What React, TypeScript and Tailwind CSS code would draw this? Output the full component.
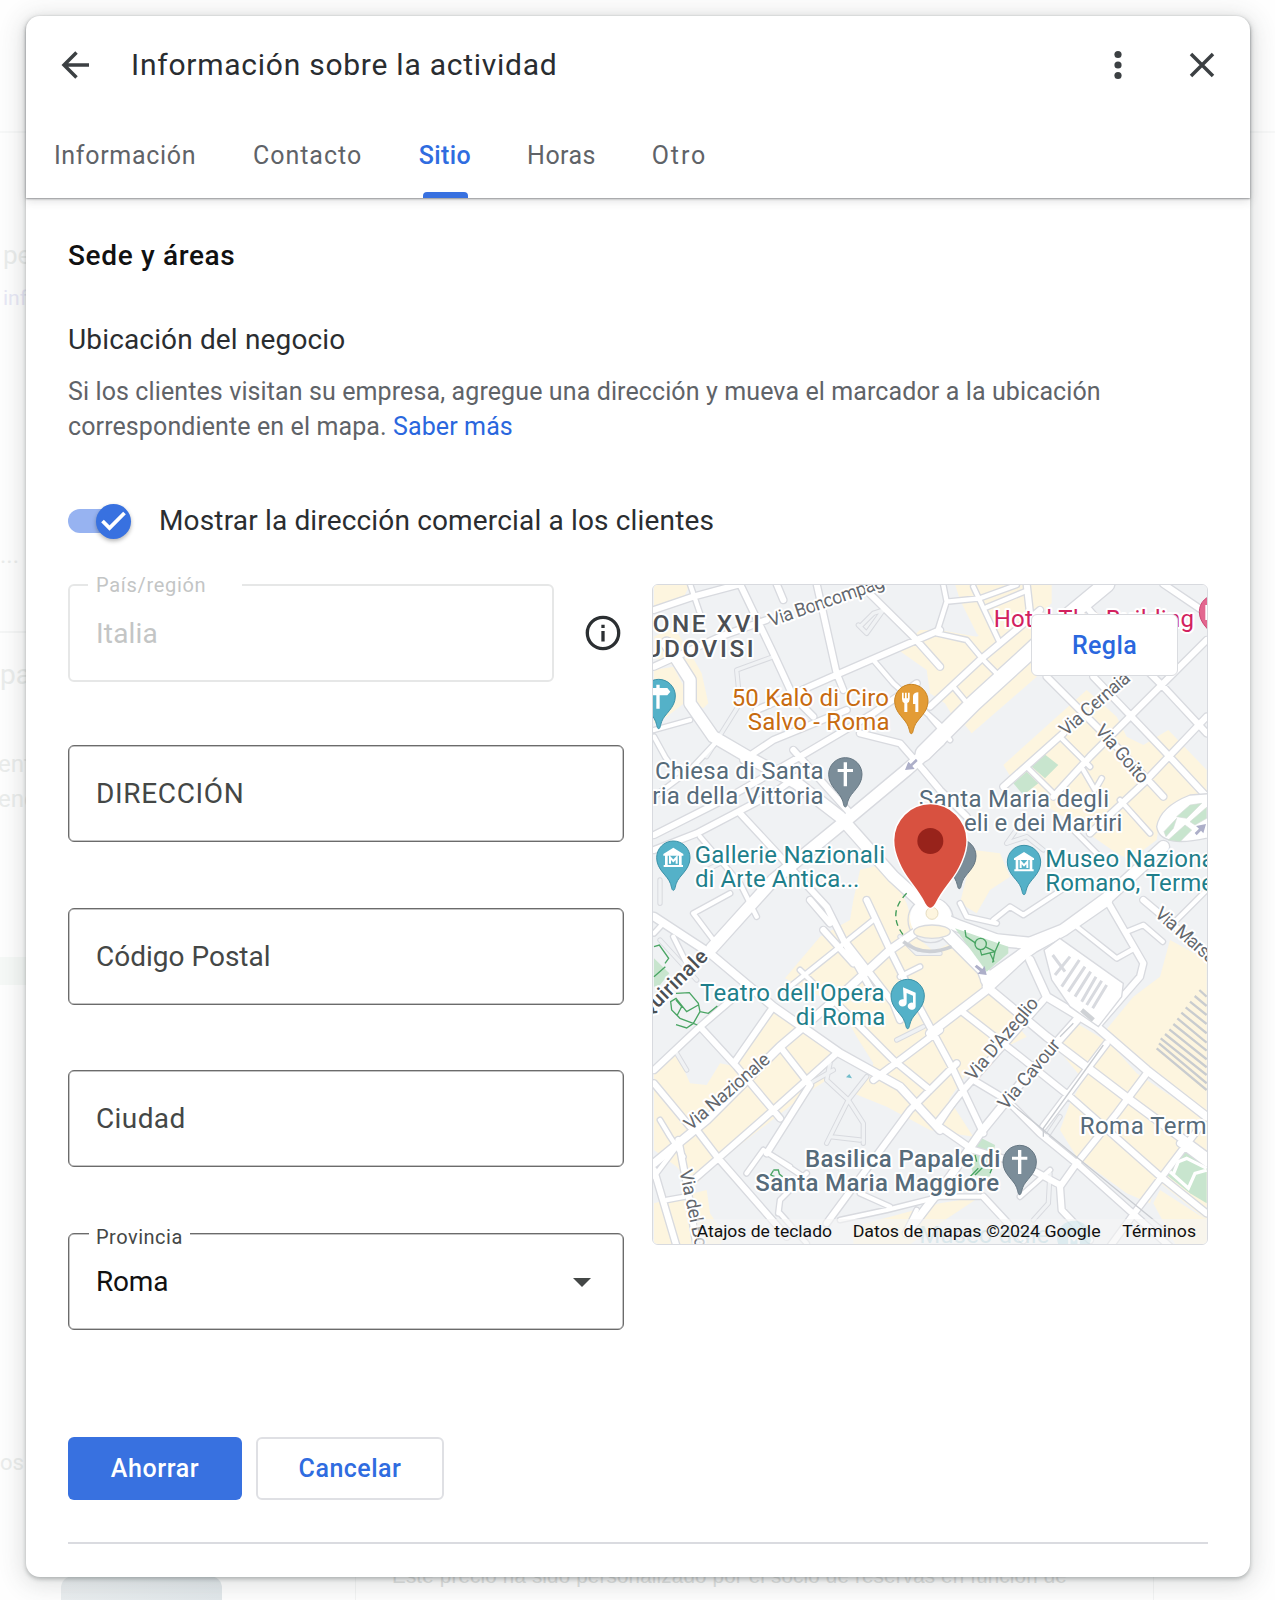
import type { ReactNode } from 'react';

const tabs = [
  { label: 'Información', width: 'w-[142px]', tracking: 'tracking-[0.68px]' },
  { label: 'Contacto', width: 'w-[109px]', tracking: 'tracking-[0.98px]' },
  { label: 'Sitio', width: 'w-[52px]', tracking: 'tracking-[0.4px]', active: true },
  { label: 'Horas', width: 'w-[67px]', tracking: 'tracking-[0.45px]' },
  { label: 'Otro', width: 'w-[55px]', tracking: 'tracking-[1.9px]' },
];

// Map geometry lives in one 1668x1983 coordinate space (3 units per pixel)
const blocks = [
  '42,42 150,42 130,85 42,112',
  '42,200 100,170 140,230 185,310 205,400 190,415 165,400 140,330 110,290 42,262',
  '100,290 132,350 132,400 80,440 42,460 42,300',
  '775,240 840,180 900,180 1010,200 1170,120 1170,240 945,450 915,400 870,370 860,300',
  '945,42 1235,42 1235,100 1190,140 1190,320 995,490 975,465 1010,425 1120,320 1010,190 960,90',
  '1090,585 1340,360 1430,440 1460,500 1510,525 1585,480 1700,600 1700,670 1650,680 1560,740 1550,810 1470,870 1430,850 1330,780 1270,740 1130,650',
  '1000,840 1080,850 1110,920 1050,960 1010,1030 960,1000',
  '660,900 740,880 800,1000 830,1100 900,1160 900,1290 870,1500 1000,1700 870,1680 740,1610 640,1570 690,1520 700,1480 650,1400 600,1310 435,1225 540,1100 630,1050 640,990',
  '390,1320 600,1450 530,1510 560,1530 500,1570 235,1775 160,1850 110,1790 42,1740 42,1500 110,1450 150,1540 200,1545 240,1480 290,1490',
  '42,1900 80,1890 200,1860 210,1930 250,1990 240,2030 42,2030',
  '870,1150 930,1120 1040,1230 1040,1260 1160,1400 1000,1480 940,1570 890,1640 870,1600',
  '970,1330 1040,1260 1130,1340 1030,1470 970,1430',
  '1240,1420 1310,1360 1410,1420 1490,1510 1700,1650 1700,1950 1550,1830 1530,1900 1460,1870 1310,1760 1260,1680 1290,1600 1330,1530',
  '1590,1110 1700,1170 1700,1640 1520,1510 1390,1390 1480,1280 1560,1220',
  '1560,1860 1700,1950 1700,2030 1610,2030 1540,1900',
  '640,1970 900,1900 1020,1880 900,1960 800,2030 640,2030',
];

const roads: { w: number; d: string[] }[] = [
  {
    w: 13,
    d: [
      'M150 42 180 130', 'M42 500 75 560 110 610', 'M42 680 150 600 225 520', 'M42 480 150 450',
      'M700 270 760 340 900 465', 'M910 45 920 95 890 190 980 210 1030 270 1080 320',
      'M920 95 1020 85 1130 45', 'M1000 50 1080 220', 'M1040 112 1160 62', 'M870 440 930 510',
      'M940 350 990 410', 'M1260 500 1350 590', 'M1160 590 1240 670', 'M1330 600 1365 660 1385 625',
      'M1440 690 1530 790', 'M180 800 300 940 350 1040', 'M160 1030 220 1110', 'M270 970 160 1030',
      'M480 1200 520 1240', 'M700 1050 450 1250', 'M1310 1070 1430 1165 1475 1140',
      'M1460 1085 1510 1065 1568 1115', 'M1700 960 1610 1050', 'M42 1820 110 1730', 'M80 1890 135 1880',
      'M370 1740 490 1820', 'M500 1810 420 1890 415 1930', 'M1140 1880 1230 1800', 'M600 1950 740 1920 900 1880 1020 1880',
      'M1300 780 1380 860', 'M660 1870 750 1910', 'M800 1980 830 1920', 'M42 1090 70 1060', 'M100 1100 140 1180',
      'M320 1810 370 1740 450 1790', 'M420 1930 500 2020', 'M960 1000 980 1040 1070 1060', 'M1060 1050 1110 1010 1150 1035 1280 950',
      'M960 1570 900 1660', 'M60 1650 90 1700 130 1760', 'M840 1190 780 1220',
    ],
  },
  {
    w: 18,
    d: [
      'M42 120 160 80 290 45', 'M300 42 400 250 460 380 520 440', 'M410 42 430 90', 'M530 42 590 310 610 360',
      'M42 290 240 200 380 150', 'M350 420 600 310 830 210 900 180', 'M660 42 820 200 900 290',
      'M42 795 270 680 480 560 700 430 830 340', 'M310 570 400 510 620 420', 'M300 730 560 1010 610 1110 700 1270',
      'M42 840 170 790 400 670', 'M400 670 470 620', 'M660 490 780 520 850 600 900 660 980 740', 'M460 540 640 740',
      'M1160 42 1170 130', 'M870 410 1020 270 1200 120', 'M1220 320 1440 540 1570 680', 'M1330 100 1400 180 1570 350 1700 490',
      'M1360 320 1570 540 1700 680', 'M1700 210 1560 350 1350 560 1240 680', 'M1700 440 1510 640 1350 790',
      'M1090 650 1270 490', 'M1570 42 1700 130', 'M400 1310 285 1475', 'M180 1370 290 1490 420 1645',
      'M42 1500 180 1370 320 1250', 'M170 1680 235 1765 440 2000', 'M42 1540 150 1670', 'M160 1830 235 1765 400 1620 590 1450',
      'M420 1430 510 1545 380 1750', 'M510 990 570 1060', 'M680 990 750 1140 810 1260 940 1500 1030 1690',
      'M590 1300 760 1470 870 1560', 'M900 1380 700 1530', 'M950 1480 810 1620 560 1960', 'M620 1120 760 1300 780 1350',
      'M42 1800 110 2030', 'M115 1710 140 1840 170 2030', 'M960 1320 1140 1460 1290 1580 1550 1810 1700 1930',
      'M1220 1280 970 1560 890 1660', 'M1000 1530 1100 1590 1200 1690 1310 1780 1590 2030',
      'M1520 1510 1430 1630 1310 1780 1260 1850 1265 1920 1350 2010', 'M1680 1670 1490 1920 1410 2030',
      'M870 1650 1000 1740 1140 1780 1260 1845', 'M1400 990 1510 1180 1500 1220 1370 1370', 'M1510 990 1700 1150',
      'M1400 1420 1210 1670', 'M1030 1880 1150 2010', 'M1620 1720 1700 1780', 'M550 1080 640 1180',
    ],
  },
  {
    w: 23,
    d: [
      'M42 1040 210 1150 400 1310 600 1450 780 1550 900 1680', 'M42 1780 200 1650 420 1430 620 1260 750 1140 880 1050',
      'M870 1390 1040 1260 1180 1130', 'M1040 1250 1220 1400 1470 1590 1700 1760', 'M1170 1170 1220 1280 1370 1370 1520 1500 1700 1640',
      'M1310 1350 1150 1530 1020 1690 930 1820 800 1990',
    ],
  },
  {
    w: 34,
    d: [
      'M80 220 150 330 150 400 220 500 340 570 470 640 600 740 760 920 870 1020',
      'M900 510 800 600 620 750 400 930 215 1135', 'M890 1040 960 1070 1070 1110 1170 1120 1270 1080 1400 990',
      'M890 1060 1030 1200 1045 1240', 'M1040 1230 1180 1130 1270 1080 1400 985 1570 830',
    ],
  },
  { w: 46, d: ['M850 550 1000 400 1170 245 1270 150 1400 42'] },
];

const lanes = [
  'M400 260 290 300 300 400 200 560', 'M660 170 700 130 730 120 680 190 655 165Z', 'M570 1480 560 1530 625 1590 670 1660 670 1720',
  'M625 1590 560 1720', 'M625 1590 680 1520', 'M510 1540 580 1500', 'M110 1450 140 1500', 'M60 1110 170 1230',
  'M1220 1700 1260 1640', 'M1230 1810 1225 1900 1180 1950', 'M780 1100 830 1150 900 1150', 'M570 1700 660 1710',
  'M850 1370 770 1410', 'M200 900 240 880', 'M1150 750 1100 820 1160 800 1210 840', 'M60 930 60 1000',
];

const platforms = [
  'M1238 1155 1275 1205', 'M1290 1160 1245 1215', 'M1318 1170 1265 1250', 'M1335 1190 1285 1265', 'M1352 1205 1305 1280',
  'M1368 1220 1325 1295', 'M1385 1232 1340 1305', 'M1400 1245 1358 1315',
];

const tracks = [
  'M1550 1435 1700 1560', 'M1557 1420 1700 1540', 'M1562 1405 1700 1515', 'M1575 1392 1700 1492', 'M1588 1378 1700 1468',
  'M1600 1362 1700 1442', 'M1612 1345 1700 1418', 'M1624 1328 1700 1390', 'M1637 1312 1700 1362', 'M1650 1295 1700 1335',
  'M1664 1278 1700 1308', 'M1678 1260 1700 1280',
];

type MapText = { x: number; y: number; w: number; text: string; fill: string; size?: number; rotate?: number; bold?: boolean };

const teal = '#1f7f8b';
const slate = '#566b7a';
const street = '#63676d';

const mapTexts: MapText[] = [
  { x: 38, y: 187, w: 322, text: 'ONE XVI', fill: '#4b4f54', bold: true, size: 73 },
  { x: 16, y: 260, w: 325, text: 'UDOVISI', fill: '#4b4f54', bold: true, size: 73 },
  { x: 393, y: 170, w: 364, text: 'Via Boncompag', fill: street, size: 56, rotate: -19 },
  { x: 275, y: 408, w: 472, text: '50 Kalò di Ciro', fill: '#c76b10' },
  { x: 323, y: 481, w: 426, text: 'Salvo - Roma', fill: '#c76b10' },
  { x: 45, y: 628, w: 506, text: 'Chiesa di Santa', fill: slate },
  { x: 37, y: 701, w: 514, text: 'ria della Vittoria', fill: slate },
  { x: 164, y: 878, w: 571, text: 'Gallerie Nazionali', fill: teal },
  { x: 165, y: 951, w: 493, text: 'di Arte Antica...', fill: teal },
  { x: 1061, y: 172, w: 601, text: 'Hotel The Building', fill: '#d2215e' },
  { x: 837, y: 710, w: 570, text: 'Santa Maria degli', fill: slate },
  { x: 972, y: 782, w: 475, text: 'eli e dei Martiri', fill: slate },
  { x: 1216, y: 891, w: 508, text: 'Museo Naziona', fill: teal },
  { x: 1216, y: 964, w: 506, text: 'Romano, Terme', fill: teal },
  { x: 1278, y: 500, w: 260, text: 'Via Cernaia', fill: street, size: 56, rotate: -41 },
  { x: 1363, y: 484, w: 212, text: 'Via Goito', fill: street, size: 56, rotate: 49 },
  { x: 1541, y: 1036, w: 226, text: 'Via Marsa', fill: street, size: 56, rotate: 41 },
  { x: 180, y: 1292, w: 554, text: "Teatro dell'Opera", fill: teal },
  { x: 467, y: 1365, w: 269, text: 'di Roma', fill: teal },
  { x: 22, y: 1348, w: 262, text: 'Quirinale', fill: '#4b4f54', size: 62, rotate: -45, bold: true },
  { x: 152, y: 1684, w: 320, text: 'Via Nazionale', fill: street, size: 56, rotate: -41 },
  { x: 118, y: 1803, w: 238, text: 'Via del Bo', fill: street, size: 56, rotate: 78 },
  { x: 1001, y: 1535, w: 306, text: "Via D'Azeglio", fill: street, size: 56, rotate: -50 },
  { x: 1099, y: 1622, w: 256, text: 'Via Cavour', fill: street, size: 56, rotate: -50 },
  { x: 1319, y: 1692, w: 381, text: 'Roma Term', fill: slate },
  { x: 495, y: 1790, w: 586, text: 'Basilica Papale di', fill: slate, bold: true },
  { x: 346, y: 1863, w: 731, text: 'Santa Maria Maggiore', fill: slate, bold: true },
];

const Label = ({ x, y, w, text, fill, size = 72, rotate = 0, bold }: MapText) => (
  <text
    x={x}
    y={y}
    transform={`rotate(${rotate} ${x} ${y})`}
    textLength={w}
    fontSize={size}
    fontWeight={bold ? 500 : 400}
    fill={fill}
    stroke="#ffffff"
    strokeWidth={12}
    strokeLinejoin="round"
    paintOrder="stroke"
  >
    {text}
  </text>
);

const Pin = ({ x, y, color, edge, children }: { x: number; y: number; color: string; edge: string; children?: ReactNode }) => (
  <g transform={`translate(${x} ${y})`}>
    <path
      d="M0 98C-5 98-5 88-9 77-17 53-50 37-50 0A50 50 0 0 1 50 0C50 37 17 53 9 77 5 88 5 98 0 98Z"
      fill={color}
      stroke={edge}
      strokeWidth={3}
    />
    <g fill="#fff" stroke="none">{children}</g>
  </g>
);

const CrossGlyph = () => <path d="M-5-36H5V-16H23V-7H5V36H-5V-7H-23V-16H-5Z" />;

const MuseumGlyph = () => (
  <>
    <path d="M0-30 30-11V-6H-30V-11ZM-25-6H-17V22H-25ZM17-6H25V22H17ZM-29 22H29V28H-29Z" />
    <path d="M-10 18V-1L0 10 10-1V18" fill="none" stroke="#fff" strokeWidth={6} />
  </>
);

const CityMap = () => (
  <svg viewBox="39 45 1662 1977" className="block h-full w-full font-[Roboto,sans-serif]" preserveAspectRatio="none">
    <rect x={30} y={30} width={1700} height={2020} fill="#f0f2f4" />
    <g fill="#fdf5df">
      {blocks.map((points) => (
        <polygon key={points} points={points} />
      ))}
    </g>
    <g fill="#c8e5ce">
      <path d="M1175 590 1210 550 1255 585 1215 625Z" />
      <path d="M1120 640 1160 605 1195 640 1150 675Z" />
      <path d="M42 1165 88 1210 60 1245 42 1250Z" />
      <path d="M985 1755 1025 1705 1065 1725 1050 1820 1000 1815Z" />
      <path d="M1580 1815 1625 1740 1700 1780V1900L1650 1870Z" />
    </g>

    <g fill="none" stroke="#d8dadf" strokeLinejoin="round" strokeLinecap="round">
      {roads.map(({ w, d }) => (
        <path key={w} d={d.join('')} strokeWidth={w + 8} />
      ))}
      <path d={lanes.join('')} strokeWidth={16} />
      <circle cx={872} cy={1050} r={68} strokeWidth={4} />
    </g>
    <g fill="none" stroke="#f0f2f4" strokeLinejoin="round" strokeLinecap="round">
      <path d={lanes.join('')} strokeWidth={10} />
    </g>
    <g fill="none" stroke="#ffffff" strokeLinejoin="round" strokeLinecap="round">
      {roads.map(({ w, d }) => (
        <path key={w} d={d.join('')} strokeWidth={w} />
      ))}
    </g>

    {/* Piazza della Repubblica */}
    <circle cx={872} cy={1044} r={62} fill="#fff" />
    <ellipse cx={876} cy={1085} rx={55} ry={20} fill="#fdf5df" stroke="#d8dadf" strokeWidth={4} />
    <path d="M790 1115Q850 1165 935 1130" fill="none" stroke="#cdd0d5" strokeWidth={11} />
    <circle cx={876} cy={1030} r={18} fill="#fdf5df" stroke="#e6dcc0" strokeWidth={3} />
    <path d="M800 970Q740 1030 790 1095" fill="none" stroke="#3f9b58" strokeWidth={4} strokeDasharray="18 12" />

    {/* Piazza dei Cinquecento */}
    <path d="M1212 1140 1260 1105 1450 1240 1445 1280 1375 1370 1290 1310 1235 1230Z" fill="#fff" stroke="#d8dadf" strokeWidth={4} />
    <path d={platforms.join('')} stroke="#d8dadf" strokeWidth={9} />
    <path d={tracks.join('')} stroke="#c9cccf" strokeWidth={7} />
    <path d="M1325 1320 1360 1350" stroke="#cfd2d6" strokeWidth={14} />
    <path d="M1390 1425 1210 1675V1700M1300 1360 1260 1400M1100 1590 1590 1990" fill="none" stroke="#c9ccd1" strokeWidth={4} />

    <path d="M945 1075 1105 1130V1150L1040 1205Z" fill="#c8e5ce" />
    <g fill="none" stroke="#4aa564" strokeWidth={4}>
      <path d="M975 1080 978 1100 1008 1120M1035 1130 1065 1145 1078 1115M1065 1145 1058 1178M1020 1138 1025 1155 1065 1145M1050 1150 1062 1175" />
      <circle cx={1022} cy={1122} r={17} />
      <path d="M42 1130 58 1125 86 1165 75 1180M42 1220 76 1190" />
      <path d="M108 1270 148 1268 175 1300 180 1325 160 1360 120 1345 95 1320 92 1295 108 1285 140 1325 175 1305M108 1290 125 1310 112 1335M180 1325 205 1330 232 1308M160 1360 140 1374 108 1364M160 1360 172 1365" />
      <path d="M400 1800 415 1800 418 1812 428 1820M405 1820 392 1815 400 1802" />
      <path d="M990 1820 1015 1795M1005 1815 1030 1790M1050 1810 1058 1790M1005 1755 1010 1775" />
    </g>

    {/* Gardens to the east */}
    <path d="M1720 670 1650 675Q1560 710 1550 770 1560 840 1720 800Z" fill="#fff" stroke="#d8dadf" strokeWidth={4} />
    <g fill="#c8e5ce" stroke="#d5dcd8" strokeWidth={2}>
      <path d="M1610 740 1650 705 1685 700 1640 745Z" />
      <path d="M1572 785 1610 745 1600 775 1578 800Z" />
      <path d="M1585 810 1635 765 1655 780 1620 815Z" />
      <path d="M1650 755 1700 712V745L1665 765Z" />
    </g>
    <path d="M1590 1805 1645 1855 1665 1810 1700 1800M1600 1812 1615 1775 1640 1765 1700 1795" fill="none" stroke="#fff" strokeWidth={10} />
    <g fill="#adafc9">
      <path d="M795 600 805 575 812 582 828 566 833 573 817 588 824 597Z" />
      <path d="M1698 762 1690 790 1683 782 1670 796 1664 789 1677 776 1668 768Z" />
      <path d="M1040 1215 1012 1211 1020 1204 1004 1190 1010 1184 1027 1197 1034 1188Z" />
    </g>
    <path d="M618 1522 628 1512 636 1525Z" fill="#72bdcb" />

    {mapTexts.map((t) => (
      <Label key={t.text} {...t} />
    ))}

    <Pin x={56} y={378} color="#54b1c8" edge="#3d92a8">
      <path d="M-7-34H3V-24H26L35-13 26-2H3V38H-7V-2H-26V-24H-7Z" />
    </Pin>
    <Pin x={814} y={393} color="#e39c36" edge="#c98524">
      <path d="M-28-25H-23V-8H-19V-25H-14V-8H-10V-25H-5V-6Q-5 3-12 6V33H-21V6Q-28 3-28-6ZM5-15Q7-26 21-26V33H12V9H5Z" />
    </Pin>
    <Pin x={616} y={613} color="#7b8d99" edge="#667783">
      <CrossGlyph />
    </Pin>
    <Pin x={100} y={863} color="#54b1c8" edge="#3d92a8">
      <MuseumGlyph />
    </Pin>
    <Pin x={1152} y={876} color="#54b1c8" edge="#3d92a8">
      <MuseumGlyph />
    </Pin>
    <Pin x={958} y={858} color="#7b8d99" edge="#667783" />
    <Pin x={803} y={1278} color="#54b1c8" edge="#3d92a8">
      <path d="M-14-28 24-12V30A12 11 0 1 1 16 18V-3L-3-11V18A12 11 0 1 1-12 8Z" transform="translate(0 2)" />
    </Pin>
    <Pin x={1139} y={1776} color="#7b8d99" edge="#667783">
      <CrossGlyph />
    </Pin>
    <Pin x={1728} y={125} color="#e2678f" edge="#cf4775">
      <path d="M-32-20H-24V25H-32Z" />
    </Pin>

    <path
      d="M871 1013C862 1013 856 1000 848 985 826 946 796 920 778 875 768 852 763 832 763 811A108 108 0 0 1 979 811C979 832 974 852 964 875 946 920 916 946 894 985 886 1000 880 1013 871 1013Z"
      fill="#d85140"
      stroke="#fff"
      strokeWidth={9}
      paintOrder="stroke"
    />
    <circle cx={871} cy={813} r={39} fill="#98231b" />

    {/* Place hidden below the attribution strip */}
    <g opacity={0.35}>
      <text x={838} y={2018} fontSize={72} textLength={390} fill="#3d9bb0">Museo delle</text>
      <circle cx={1302} cy={2003} r={51} fill="#54b1c8" />
      <path d="M1288 2022V1994L1302 2010 1316 1994V2022" fill="none" stroke="#fff" strokeWidth={7} />
    </g>
    <rect x={170} y={1947} width={1540} height={80} fill="#f5f5f5" opacity={0.6} />
    <g fontSize={50} fill="#101010">
      <text x={170} y={2001} textLength={406} lengthAdjust="spacingAndGlyphs">Atajos de teclado</text>
      <text x={638} y={2001} textLength={744} lengthAdjust="spacingAndGlyphs">Datos de mapas ©2024 Google</text>
      <text x={1447} y={2001} textLength={221} lengthAdjust="spacingAndGlyphs">Términos</text>
    </g>
  </svg>
);

const Field = ({ tracking, children }: { tracking?: string; children: ReactNode }) => (
  <div
    className={`flex h-[97px] items-center rounded-md border border-[#6b6b6b] px-[27px] pt-px text-[28px] text-[#444746] shadow-[inset_0_0_0_0.5px_#8a8a8a] ${tracking ?? ''}`}
  >
    {children}
  </div>
);

// Page dimmed behind the dialog
const Backdrop = () => (
  <div className="absolute inset-0 overflow-hidden bg-[#fefefe] text-[24px] leading-none text-[#ebedec]">
    <div className="absolute top-[131px] h-0.5 w-full bg-[#f7f8f8]" />
    <div className="absolute top-[631px] h-0.5 w-[26px] bg-[#f5f6f6]" />
    <div className="absolute top-[957px] h-[28px] w-[26px] bg-[#f6f9f7]" />
    <span className="absolute top-[242px] left-[3px] text-[26px]">pe</span>
    <span className="absolute top-[288px] left-[3px] text-[21px] text-[#e8e8f6]">inf</span>
    <span className="absolute top-[543px] left-0">...</span>
    <span className="absolute top-[661px] left-0 text-[28px]">pa</span>
    <span className="absolute top-[752px] -left-0.5">ent</span>
    <span className="absolute top-[787px] -left-0.5">enc</span>
    <span className="absolute top-[1452px] left-0 text-[22px]">os</span>
    <div className="absolute top-[1576px] left-[61px] h-[60px] w-[161px] rounded-xl bg-gradient-to-r from-[#eaeef0] to-[#e2e8eb]" />
    <div className="absolute top-[1560px] left-[355px] h-10 w-px bg-[#f3f4f4]" />
    <div className="absolute top-[1560px] left-[1153px] h-10 w-px bg-[#f3f4f4]" />
    <span className="absolute top-[1566px] left-[392px] font-['Liberation_Sans',sans-serif] text-[20.5px] tracking-[0.21px] whitespace-nowrap text-[#dfe1e0]">
      Este precio ha sido personalizado por el socio de reservas en función de
    </span>
  </div>
);

export default function App() {
  return (
    <div className="relative h-[1600px] w-[1275px] overflow-hidden font-[Roboto,sans-serif] text-[#2a2d30]">
      <Backdrop />

      <div className="relative mt-4 ml-[26px] flex h-[1561px] w-[1224px] flex-col overflow-visible rounded-[14px] bg-white shadow-[0_2px_4px_rgba(60,70,68,0.35),0_4px_24px_4px_rgba(60,70,68,0.16)]">
        <header className="relative h-[182px] rounded-t-[14px] bg-white shadow-[0_1px_2px_rgba(60,64,67,0.5),0_3px_10px_rgba(60,64,67,0.16)]">
          <div className="flex h-[98px] items-center pr-[35px] pl-[35px]">
            <svg width="29" height="28" viewBox="0 0 29 28" fill="none" stroke="#3c4043" strokeWidth="3.5">
              <path d="M28 14H3M15.5 1.5 3 14 15.5 26.5" />
            </svg>
            <h1 className="ml-[41px] pb-0.5 text-[30px] tracking-[0.75px]">Información sobre la actividad</h1>
            <svg className="ml-auto" width="8" height="34" viewBox="0 0 8 34" fill="#3c4043">
              <circle cx="4" cy="6.5" r="3.6" />
              <circle cx="4" cy="17" r="3.6" />
              <circle cx="4" cy="27.5" r="3.6" />
            </svg>
            <svg className="ml-[67px]" width="26" height="26" viewBox="0 0 26 26" stroke="#3c4043" strokeWidth="3.5">
              <path d="M2 2 24 24M24 2 2 24" />
            </svg>
          </div>
          <nav className="flex h-[84px] gap-[57px] pl-7">
            {tabs.map((tab) => (
              <div
                key={tab.label}
                className={`flex flex-col items-center text-[25px] whitespace-nowrap ${tab.width} ${tab.active ? 'font-medium text-[#2f6ce0]' : 'text-[#5f6368]'}`}
              >
                <span className={`mt-[23px] leading-[38px] ${tab.tracking}`}>{tab.label}</span>
                {tab.active && <span className="mt-auto h-[6px] w-[45px] rounded-t-[4px] bg-[#3871e0]" />}
              </div>
            ))}
          </nav>
        </header>

        <main className="px-[42px]">
          <h2 className="mt-10 text-[28px] leading-9 font-medium tracking-[0.65px] text-[#111]">Sede y áreas</h2>
          <h3 className="mt-12 text-[28px] leading-9 tracking-[0.15px]">Ubicación del negocio</h3>
          <p className="mt-4 text-[25px] leading-[35px] tracking-[0.11px] whitespace-nowrap text-[#5f6368]">
            Si los clientes visitan su empresa, agregue una dirección y mueva el marcador a la ubicación
            <br />
            correspondiente en el mapa. <a className="text-[#2a67de]">Saber más</a>
          </p>

          <div className="mt-[59px] flex h-9 items-center">
            <div className="flex h-6 w-[61px] items-center justify-end rounded-full bg-[#97b3f1]">
              <span className="-mr-0.5 flex size-[35px] items-center justify-center rounded-full bg-[#3871e0] shadow-[0_2px_4px_rgba(0,0,0,0.3)]">
                <svg width="25" height="20" viewBox="0 0 25 20" fill="none" stroke="#fff" strokeWidth="3.8">
                  <path d="M1.5 10 8.5 17 23.5 2" />
                </svg>
              </span>
            </div>
            <span className="ml-[30px] text-[28px] tracking-[0.16px]">Mostrar la dirección comercial a los clientes</span>
          </div>

          <div className="mt-[45px] flex justify-between">
            <form className="w-[556px]">
              <div className="flex h-[98px] items-center">
                <div className="relative flex h-full w-[486px] items-center rounded-md border-2 border-[#e6e7e7] pt-px pl-[26px] text-[28px] tracking-[0.2px] text-[#c3c5c5]">
                  <span className="absolute -top-[13px] left-[18px] w-[154px] bg-white pl-2 text-[20px] leading-6 tracking-[0.7px]">País/región</span>
                  Italia
                </div>
                <svg className="ml-[31px]" width="36" height="36" viewBox="0 0 36 36" fill="none" stroke="#2b2f32" strokeWidth="3.3">
                  <circle cx="18" cy="18" r="15.7" />
                  <path d="M18 16V26.5M18 9.7V13" />
                </svg>
              </div>
              <div className="mt-[63px] flex flex-col gap-[65.7px]">
                <Field tracking="tracking-[0.65px]">DIRECCIÓN</Field>
                <Field>Código Postal</Field>
                <Field tracking="tracking-[0.4px]">Ciudad</Field>
                <div className="relative">
                  <Field>
                    <span className="tracking-[-0.2px] text-[#111]">Roma</span>
                    <svg className="mr-[5px] ml-auto" width="18" height="9" viewBox="0 0 18 9" fill="#444746">
                      <path d="M0 0H18L9 9Z" />
                    </svg>
                  </Field>
                  <span className="absolute -top-2 left-[21px] bg-white px-[7px] text-[20px] leading-6 tracking-[0.5px] text-[#444746]">Provincia</span>
                </div>
              </div>
            </form>

            <div className="relative h-[661px] w-[556px] overflow-hidden rounded-md border border-[#d8dadf]">
              <CityMap />
              <button className="absolute top-[29px] right-[29px] h-[62px] w-[147px] rounded-md border border-[#dadce0] bg-white pt-0.5 text-[25px] font-medium tracking-[0.4px] text-[#2a67de]">
                Regla
              </button>
            </div>
          </div>

          <div className="mt-[107px] flex gap-[14px] text-[25px] font-medium">
            <button className="h-[63px] w-[174px] rounded-md bg-[#3871e0] tracking-[0.6px] text-white">Ahorrar</button>
            <button className="h-[63px] w-[188px] rounded-md border-2 border-[#dfe0e4] tracking-[0.5px] text-[#2f6ce0]">Cancelar</button>
          </div>
          <hr className="mt-[42px] border-t-2 border-[#dadbe0]" />
        </main>
      </div>
    </div>
  );
}
